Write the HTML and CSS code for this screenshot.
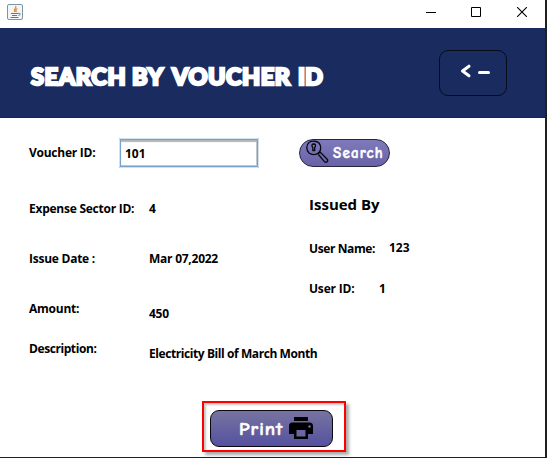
FILE: index.html
```html
<!DOCTYPE html>
<html lang="en">
<head>
<meta charset="utf-8">
<title>Search by Voucher ID</title>
<link rel="stylesheet" href="styles.css">
</head>
<body>
<div class="window">
  <div class="titlebar">
    <svg class="java" width="16" height="16" viewBox="0 0 16 16" fill="none">
      <rect x=".5" y=".5" width="15" height="15" rx="1.5" fill="#f3f6f8" stroke="#7c95a4"/>
      <path d="M8.5 2c2 2-3 3-.4 6M10.5 4.500c-2 1-2 1.600-1 3.500" stroke="#ed8a32" stroke-width="1.300"/>
      <path d="M4 9.500h7M5 11.500h5M3.500 13.500h8M11 9.500c3-.8 2.800 1.500.4 2" stroke="#587b91"/>
    </svg>
    <div class="controls">
      <svg width="10" height="10" viewBox="0 0 10 10"><path d="M0 5.500h10" stroke="#000"/></svg>
      <svg width="10" height="10" viewBox="0 0 10 10"><path d="M.5.5h9v9h-9z" fill="none" stroke="#000"/></svg>
      <svg class="close" width="10" height="10" viewBox="0 0 10 10"><path d="M0 0l10 10M10 0L0 10" stroke="#000" stroke-width="1.100"/></svg>
    </div>
  </div>
  <header class="header">
    <h1 class="title"><span class="w-search">SEARCH</span><span class="w-by">BY</span><span class="w-voucher">VOUCHER</span><span class="w-id">ID</span></h1>
    <button class="back" aria-label="Back">
      <svg width="30" height="14" viewBox="0 0 30 14" fill="none" stroke="#fff" stroke-width="3" stroke-linecap="round" stroke-linejoin="round"><path d="M9 2.200L2.500 7 9 11.800M19.500 8.500h9"/></svg>
    </button>
  </header>
  <main class="content">
    <section class="details">
      <div class="row voucher"><label>Voucher ID:</label><input value="101"></div>
      <div class="row sector"><span>Expense Sector ID:</span><span>4</span></div>
      <div class="row date"><span>Issue Date :</span><span>Mar 07,2022</span></div>
      <div class="row amount"><span>Amount:</span><span class="low">450</span></div>
      <div class="row description"><span>Description:</span><span class="low">Electricity Bill of March Month</span></div>
    </section>
    <section class="issuer">
      <button class="search">
        <svg width="24" height="24" viewBox="0 0 24 24" fill="none" stroke="#08080f" stroke-width="1.300" stroke-linejoin="round"><path d="M4 2.500c3-2 8-1.500 10 .5 2.500 3 2 7.500 0 9.500-3 3-7.500 2.500-10 .5C1 10 1 5 4 2.500z"/><path d="M13 14l2-2 7 7c1.800 2-.8 4.300-2.600 2.600L13 14"/><path d="M7.800 10.500V7.500C6 5.500 7 4 8.700 4s2.700 1.500 1 3.500v3z"/></svg>
        <span>Search</span>
      </button>
      <h2>Issued By</h2>
      <div class="pair name"><span>User Name:</span><span class="value">123</span></div>
      <div class="pair user"><span>User ID:</span><span class="value">1</span></div>
    </section>
  </main>
  <footer class="footer">
    <div class="highlight">
      <button class="print"><span>Print</span>
        <svg width="24" height="22" viewBox="0 0 24 22"><path fill="#000" d="M5 0h14v4H5zM3.500 5.500h17Q24 5.500 24 9v8h-5v5H5v-5H0V9q0-3.500 3.500-3.500z"/><path fill="#6966a2" d="M7.500 13h9v6.500h-9z"/><circle cx="20.500" cy="9.500" r="1.200" fill="#77749f"/></svg>
      </button>
    </div>
  </footer>
</div>
</body>
</html>
```

FILE: styles.css
```css
* { box-sizing: border-box; }
body { margin: 0; background: #202020; font: 700 12px/16px "Open Sans", "Noto Sans", sans-serif; letter-spacing: -.25px; color: #000; overflow: hidden; }
.window { width: 545px; height: 457px; background: #fff; display: flex; flex-direction: column; }
.titlebar { height: 28px; display: flex; justify-content: space-between; padding: 4px 18px 0 7px; }
.controls { display: flex; gap: 35px; padding-top: 3px; }
.close { margin-left: 1px; }
svg { display: block; flex: none; }
.header { height: 90px; background: #192b5f; border-bottom: 1px solid #14224f; display: flex; justify-content: space-between; padding: 22px 38px 0 31px; }
.title { margin: 10px 0 0; display: flex; height: 32px; font: 900 23.500px/32px Lato, sans-serif; color: #fff; -webkit-text-stroke: 2.400px #fff; white-space: nowrap; }
.w-search { width: 101px; letter-spacing: .6px; }
.w-by { width: 40px; letter-spacing: .8px; }
.w-voucher { width: 126px; letter-spacing: .5px; }
.w-id { letter-spacing: 0; }
button { font-family: "Comic Neue", "Comic Sans MS", Lato, sans-serif; color: #fff; padding: 0; -webkit-text-stroke: .5px #fff; }
.back { width: 68px; height: 46px; border: 1px solid #080b18; border-radius: 9px; background: #192b5f; padding: 0 0 5px 20px; display: flex; align-items: center; }
.content { height: 278px; display: grid; grid-template-columns: 270px 1fr; padding-left: 29px; }
.details, .issuer { display: flex; flex-direction: column; }
.row { display: grid; grid-template-columns: 120px max-content; white-space: nowrap; flex: none; }
.voucher { height: 62px; padding-top: 20px; grid-template-columns: 90px 140px; }
.voucher label { padding-top: 7px; }
input { width: 140px; height: 30px; border: 2px solid #75a2cf; outline: 1px solid #cfe2f5; outline-offset: -1px; border-radius: 1px; box-shadow: inset 0 2px 1px #b5b5b5, inset -1px -1px #c7c7c7; padding: 1px 4px 0; font: inherit; letter-spacing: 0; background: #fff; }
.sector { height: 50px; padding-top: 21px; }
.date { height: 50px; padding-top: 21px; }
.amount { height: 50px; padding-top: 21px; }
.description { height: 40px; padding-top: 11px; letter-spacing: -.42px; }
.low { padding-top: 5px; }
.search { width: 91px; height: 28px; margin: 21px 0 0; border: 1px solid #28243f; border-radius: 14px; background: linear-gradient(#7e7abb, #6863a7); display: flex; align-items: center; gap: 4px; padding-left: 5px; font-size: 15px; font-weight: 700; letter-spacing: 1.200px; }
.search svg { margin-top: -2px; }
.issuer h2 { margin: 27px 0 0 10px; font: 700 15px/20px "Open Sans", sans-serif; letter-spacing: 0; }
.pair { display: grid; grid-template-columns: 80px auto; margin-left: 10px; letter-spacing: -.4px; }
.name { margin-top: 27px; }
.pair .value { letter-spacing: 0; }
.name .value { margin-top: -1px; }
.user { margin-top: 24px; grid-template-columns: 70px auto; letter-spacing: -.2px; }
.footer { flex: 1; padding: 5px 0 0 202px; }
.highlight { width: 144px; height: 51px; border: 2px solid #f00; padding: 7px 0 0 6px; box-shadow: 3px 3px 3px #aaa, inset 2px 2px 2px #c6c6c6; }
.print { width: 123px; height: 37px; border: 1px solid #08080d; border-radius: 9px; background: linear-gradient(#77749f, #5551a1); display: flex; align-items: center; gap: 6px; padding-left: 28px; font-size: 19px; font-weight: 700; letter-spacing: 1px; }
.print svg { margin-top: -1px; }
```
